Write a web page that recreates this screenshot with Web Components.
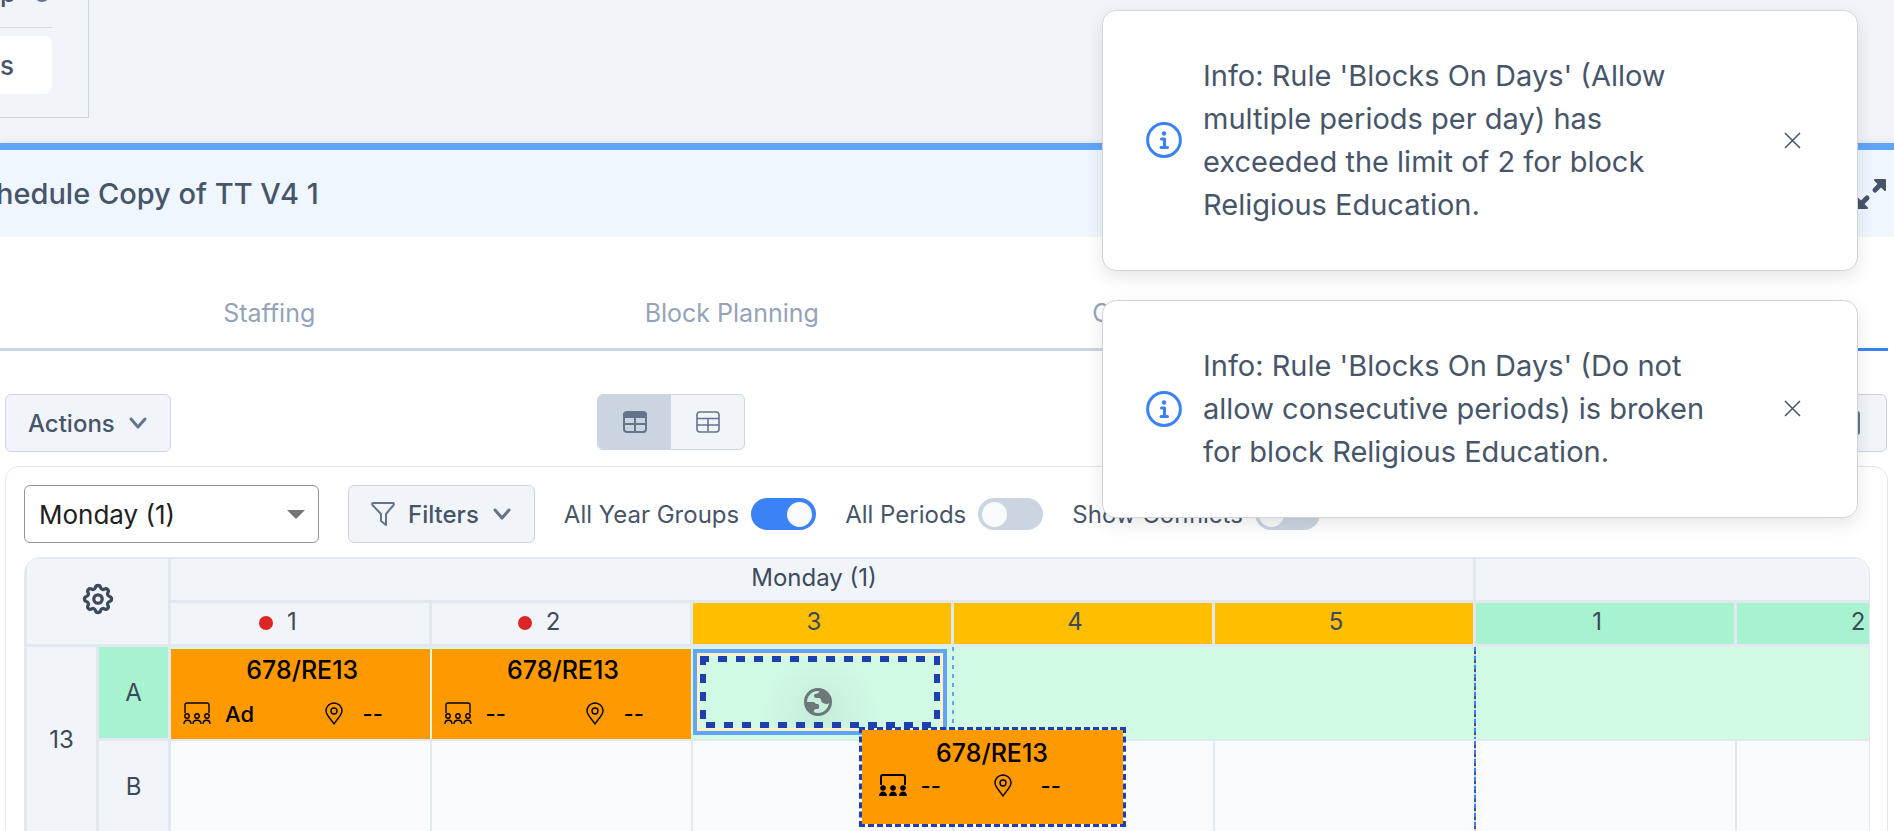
<!DOCTYPE html>
<html lang="en">
<head>
<meta charset="utf-8">
<title>Schedule</title>
<style>
    html, body {
        margin: 0;
        height: 100%;
        overflow: hidden;
        background: #f1f5f9;
        font-family: Inter, "Liberation Sans", sans-serif;
        color: #475569;
    }
</style>
</head>
<body>
<schedule-page></schedule-page>

<script>
const ICONS = {
    chevron: `<svg width="20" height="20" viewBox="0 0 20 20" fill="none" stroke="#64748b" stroke-width="3" stroke-linecap="round" stroke-linejoin="round"><path d="M3 6l7 8 7-8"/></svg>`,
    funnel: `<svg width="24" height="26" viewBox="0 0 24 26" fill="none" stroke="#64748b" stroke-width="2" stroke-linejoin="round"><path d="M2 2h20c1 0 1 1 .6 2L15 13v11l-5-4v-7L1.400 4C1 3 1 2 2 2z"/></svg>`,
    gear: `<svg width="36" height="36" viewBox="0 0 24 24" fill="none" stroke="#3d4a5c" stroke-width="2.2" stroke-linecap="round" stroke-linejoin="round"><path d="M10.325 4.317c.426-1.756 2.924-1.756 3.35 0a1.724 1.724 0 0 0 2.573 1.066c1.543-.94 3.31.826 2.37 2.37a1.724 1.724 0 0 0 1.065 2.572c1.756.426 1.756 2.924 0 3.35a1.724 1.724 0 0 0-1.066 2.573c.94 1.543-.826 3.31-2.37 2.37a1.724 1.724 0 0 0-2.572 1.065c-.426 1.756-2.924 1.756-3.35 0a1.724 1.724 0 0 0-2.573-1.066c-1.543.94-3.31-.826-2.37-2.37a1.724 1.724 0 0 0-1.065-2.572c-1.756-.426-1.756-2.924 0-3.35a1.724 1.724 0 0 0 1.066-2.573c-.94-1.543.826-3.31 2.37-2.37 1 .608 2.296.07 2.572-1.065z"/><circle cx="12" cy="12" r="2.8"/></svg>`,
    tableDark: `<svg width="24" height="24" viewBox="0 0 24 24" fill="none" stroke="#64748b" stroke-width="2"><rect x="1" y="2" width="22" height="20" rx="3"/><path d="M1 4h22v3H1z" fill="#64748b"/><path d="M1 14h22M12 7v15"/></svg>`,
    tableLight: `<svg width="24" height="24" viewBox="0 0 24 24" fill="none" stroke="#64748b" stroke-width="1.6"><rect x="1" y="2" width="22" height="20" rx="3"/><path d="M1 8.500h22M1 15h22M12 8.500v13"/></svg>`,
    expand: `<svg width="32" height="32" viewBox="0 0 32 32" fill="#475569" stroke="#475569" stroke-linejoin="round"><path stroke-width="2" d="M20 2h10v10z M12 30H2V20z"/><path stroke-width="5" stroke-linecap="round" d="M20 12l6-6M12 20l-6 6"/></svg>`,
    info: `<svg width="36" height="36" viewBox="0 0 36 36" fill="none" stroke="#3b82f6" stroke-width="3"><circle cx="18" cy="18" r="16.400"/><circle cx="18" cy="11.500" r="2.200" fill="#3b82f6" stroke="none"/><path stroke-linecap="round" stroke-linejoin="round" d="M15.500 17h3v8.500M15 25.500h6.500"/></svg>`,
    close: `<svg width="17" height="17" viewBox="0 0 17 17" fill="none" stroke="#475569" stroke-width="1.500"><path d="M1 1l15 15M16 1L1 16"/></svg>`,
    group: `<svg width="28" height="24" viewBox="0 0 28 24" fill="none" stroke="#000" stroke-width="1.4"><path d="M2 11V3a2 2 0 0 1 2-2h20a2 2 0 0 1 2 2v8"/><circle cx="4" cy="14" r="2.2"/><circle cx="14" cy="14" r="2.2"/><circle cx="24" cy="14" r="2.2"/><path d="M1 22c0-5 7-5 7 0M10 22c0-5 8-5 8 0M20 22c0-5 7-5 7 0"/></svg>`,
    groupSolid: `<svg width="28" height="24" viewBox="0 0 28 24" fill="none" stroke="#000" stroke-width="2"><path d="M2 11V3a2 2 0 0 1 2-2h20a2 2 0 0 1 2 2v8"/><g fill="#000" stroke="none"><circle cx="4" cy="14" r="2.8"/><circle cx="14" cy="14" r="2.8"/><circle cx="24" cy="14" r="2.8"/><path d="M0 22c0-6 8-6 8 0zM10 22c0-6 8-6 8 0zM20 22c0-6 8-6 8 0z"/></g></svg>`,
    pin: `<svg width="18" height="24" viewBox="0 0 18 24" fill="none" stroke="#000" stroke-width="1.4"><path d="M9 22C6 17 1 13 1 9a8 8 0 0 1 16 0c0 4-5 8-8 13z"/><circle cx="9" cy="9" r="3"/></svg>`,
    globe: `<svg width="28" height="28" viewBox="0 0 28 28"><circle cx="14" cy="14" r="12.500" fill="none" stroke="#6b7778" stroke-width="3"/><path fill="#6b7778" d="M2 14h8l2 2h2q1 0 1 2v2q0 1-2 1h-1q-2 0-2 2l-1 4A13 13 0 0 1 2 14zM17 1l-2 3q-1 2-4 2l-1 1q0 3 2 3h3q2 0 2 2t2 3q4 2 6 0l2-2A13 13 0 0 0 17 1z"/></svg>`,
    columns: `<svg width="26" height="24" viewBox="0 0 26 24" fill="none" stroke="#64748b" stroke-width="2"><rect x="1" y="1" width="20" height="22" rx="2"/><path d="M11 1v22"/></svg>`
};

class AppButton extends HTMLElement {
    connectedCallback() {
        this.attachShadow({ mode: "open" }).innerHTML = `
            <style>
                :host { display: inline-block; }
                button {
                    display: flex;
                    align-items: center;
                    gap: 13px;
                    height: 58px;
                    padding: 0 22px;
                    border: 1px solid #cbd5e1;
                    border-radius: 6px;
                    background: #f1f5f9;
                    color: #475569;
                    font: 500 24px Inter, sans-serif;
                }
            </style>
            <button type="button">${ICONS[this.getAttribute("icon")] || ""}<slot></slot>${this.hasAttribute("menu") ? ICONS.chevron : ""}</button>
        `;
    }
}

class ToggleSwitch extends HTMLElement {
    connectedCallback() {
        this.attachShadow({ mode: "open" }).innerHTML = `
            <style>
                :host { display: block; }
                label {
                    display: flex;
                    align-items: center;
                    gap: 12px;
                    font-size: 24px;
                    white-space: nowrap;
                }
                input {
                    appearance: none;
                    display: flex;
                    margin: 0;
                    width: 65px;
                    height: 32px;
                    padding: 0 4px;
                    box-sizing: border-box;
                    align-items: center;
                    border-radius: 16px;
                    background: #cbd5e1;
                }
                input::before {
                    content: "";
                    width: 25px;
                    height: 25px;
                    border-radius: 50%;
                    background: #f8fafc;
                }
                input:checked {
                    background: #3b82f6;
                    justify-content: flex-end;
                }
            </style>
            <label><slot></slot><input type="checkbox" ${this.hasAttribute("on") ? "checked" : ""}></label>
        `;
    }
}

class ViewSwitch extends HTMLElement {
    connectedCallback() {
        this.attachShadow({ mode: "open" }).innerHTML = `
            <style>
                :host {
                    display: flex;
                    height: 56px;
                    box-sizing: border-box;
                    border: 1px solid #cbd5e1;
                    border-radius: 6px;
                    overflow: hidden;
                    background: #f1f5f9;
                }
                button {
                    display: grid;
                    place-items: center;
                    width: 73px;
                    padding: 0;
                    border: 0;
                    background: none;
                }
                .on { background: #cbd5e1; }
            </style>
            <button type="button" class="on" aria-label="Grid view">${ICONS.tableDark}</button>
            <button type="button" aria-label="List view">${ICONS.tableLight}</button>
        `;
    }
}

class ToastMessage extends HTMLElement {
    connectedCallback() {
        this.attachShadow({ mode: "open" }).innerHTML = `
            <style>
                :host {
                    display: flex;
                    align-items: center;
                    padding: 43px 56px 44px 43px;
                    border: 1px solid #d1d5db;
                    border-radius: 14px;
                    background: #fff;
                    box-shadow: 0 6px 18px rgba(0, 0, 0, .1);
                }
                svg { display: block; flex: none; }
                p {
                    flex: 1;
                    margin: 0 76px 0 21px;
                    font-size: 29px;
                    line-height: 43px;
                }
                button {
                    border: 0;
                    padding: 0;
                    background: none;
                }
            </style>
            ${ICONS.info}
            <p><slot></slot></p>
            <button type="button" aria-label="Close">${ICONS.close}</button>
        `;
    }
}

class LessonCard extends HTMLElement {
    connectedCallback() {
        const dragged = this.hasAttribute("dragged");
        this.attachShadow({ mode: "open" }).innerHTML = `
            <style>
                :host {
                    display: block;
                    height: 90px;
                    box-sizing: border-box;
                    padding: 4px 8px 4px 12px;
                    background: #ff9900;
                    color: #000;
                }
                :host([dragged]) {
                    height: 100px;
                    padding: 6px 17px;
                    border: 3px dashed #1e40af;
                    background-clip: padding-box;
                }
                .name {
                    font-size: 25px;
                    font-weight: 500;
                    line-height: 34px;
                    text-align: center;
                }
                .row {
                    display: grid;
                    grid-template-columns: 42px 1fr 38px 59px;
                    align-items: center;
                    margin-top: 13px;
                    font-size: 22px;
                    font-weight: 500;
                    line-height: 28px;
                }
                :host([dragged]) .row {
                    grid-template-columns: 42px 73px 47px 1fr;
                    margin-top: 2px;
                }
                svg { display: block; }
            </style>
            <div class="name"><slot></slot></div>
            <div class="row">
                ${dragged ? ICONS.groupSolid : ICONS.group}
                <span>${this.getAttribute("staff")}</span>
                ${ICONS.pin}
                <span>${this.getAttribute("room")}</span>
            </div>
        `;
    }
}

class TimetableGrid extends HTMLElement {
    connectedCallback() {
        this.attachShadow({ mode: "open" }).innerHTML = `
            <style>
                :host {
                    display: block;
                    overflow: hidden;
                    border: 1px solid #e2e8f0;
                    border-radius: 16px 16px 0 0;
                    background: #f8fafc;
                }
                table {
                    table-layout: fixed;
                    width: 1971px;
                    margin: -2px 0 0 -1px;
                    border-collapse: collapse;
                    font-size: 24px;
                    color: #3d4a5c;
                }
                th, td {
                    box-sizing: border-box;
                    padding: 0;
                    border: 3px solid #e2e8f0;
                    font-weight: 400;
                }
                td { position: relative; border-width: 2px; }
                th { background: #f1f5f9; }
                .days th { height: 44px; }
                .periods th { height: 44px; }
                .days .settings { padding-bottom: 5px; }
                .days .day, .periods th { padding: 0 16px 4px 0; }
                .periods .amber { background: #ffbf00; }
                th.green { background: #a7f3d0; }
                .row-a { height: 94px; }
                .row-b { height: 94px; }
                .row-a td {
                    vertical-align: bottom;
                    background: #d1fae5;
                    border-color: #e2e8f0 #d1fae5;
                }
                .dot {
                    display: inline-block;
                    width: 14px;
                    height: 14px;
                    margin: 0 14px 0 -28px;
                    border-radius: 50%;
                    background: #dc2626;
                }
                svg { display: block; margin: auto; }

                /* guide lines between slots */
                .mark::before, .day-start::before {
                    content: "";
                    position: absolute;
                    top: 0;
                    bottom: 0;
                    left: -2px;
                    width: 2px;
                    background: repeating-linear-gradient(#60a5fa 0 4px, transparent 4px 9px);
                }
                .day-start::before {
                    background: repeating-linear-gradient(#3b82f6 0 4px, #475569 4px 7px, #cbd5e1 7px 9px);
                }

                .drop {
                    position: relative;
                    margin: 0 5px 4px 0;
                    height: 86px;
                    box-sizing: border-box;
                    padding: 3px;
                    border: 4px solid #60a5fa;
                    background: #fef0c7;
                }
                .zone {
                    --dash-x: repeating-linear-gradient(90deg, #1e40af 0 9px, transparent 9px 18px);
                    --dash-y: repeating-linear-gradient(#1e40af 0 9px, transparent 9px 18px);
                    display: grid;
                    place-items: end center;
                    height: 100%;
                    box-sizing: border-box;
                    padding: 0 4px 12px 0;
                    background:
                        var(--dash-x) top / 100% 6px no-repeat,
                        var(--dash-x) 6px bottom / 100% 6px no-repeat,
                        var(--dash-y) left / 6px 100% no-repeat,
                        var(--dash-y) right / 6px 100% no-repeat,
                        radial-gradient(circle at 50% 80%, #c5ecd9, #d1fae5 60px);
                }
                .zone svg { margin: 0; }
                lesson-card[dragged] {
                    position: absolute;
                    left: 162px;
                    top: 74px;
                    width: 267px;
                    z-index: 1;
                }
            </style>
            <table>
                <colgroup>
                    <col style="width: 72px"><col style="width: 72px">
                    <col span="7" style="width: 261px">
                </colgroup>
                <tr class="days">
                    <th class="settings" colspan="2" rowspan="2">${ICONS.gear}</th>
                    <th class="day" colspan="5">Monday (1)</th>
                    <th class="day" colspan="2"></th>
                </tr>
                <tr class="periods">
                    <th><span class="dot"></span>1</th>
                    <th><span class="dot"></span>2</th>
                    <th class="amber">3</th>
                    <th class="amber">4</th>
                    <th class="amber">5</th>
                    <th class="green">1</th>
                    <th class="green">2</th>
                </tr>
                <tr class="row-a">
                    <th rowspan="2">13</th>
                    <th class="green">A</th>
                    <td><lesson-card staff="Ad" room="--">678/RE13</lesson-card></td>
                    <td><lesson-card staff="--" room="--">678/RE13</lesson-card></td>
                    <td>
                        <div class="drop">
                            <div class="zone">${ICONS.globe}</div>
                            <lesson-card dragged staff="--" room="--">678/RE13</lesson-card>
                        </div>
                    </td>
                    <td class="mark"></td><td></td><td class="day-start"></td><td></td>
                </tr>
                <tr class="row-b">
                    <th>B</th>
                    <td></td><td></td><td></td><td></td><td></td><td class="day-start"></td><td></td>
                </tr>
            </table>
        `;
    }
}

class SchedulePage extends HTMLElement {
    connectedCallback() {
        this.attachShadow({ mode: "open" }).innerHTML = `
            <style>
                :host {
                    display: flex;
                    flex-direction: column;
                    height: 100%;
                    overflow: hidden;
                }
                aside {
                    flex: none;
                    width: 88px;
                    height: 117px;
                    border: solid #cbd5e1;
                    border-width: 0 1px 1px 0;
                    font-size: 26px;
                    font-weight: 500;
                }
                .copy {
                    display: flex;
                    align-items: end;
                    gap: 18px;
                    height: 27px;
                    width: 52px;
                    border-bottom: 1px solid #d3d9e0;
                    line-height: 28px;
                }
                .copy span { margin-bottom: 20px; }
                .copy i {
                    width: 16px;
                    height: 16px;
                    margin-bottom: 25px;
                    border-radius: 50%;
                    background: #64748b;
                }
                .chip {
                    display: flex;
                    align-items: center;
                    margin-top: 8px;
                    width: 52px;
                    height: 58px;
                    border-radius: 0 8px 8px 0;
                    background: #fff;
                }
                main {
                    flex: 1;
                    margin-top: 25px;
                    border-top: 7px solid #60a5fa;
                    background: #fff;
                    box-shadow: 0 0 8px rgba(0, 0, 0, .1);
                }
                header {
                    display: flex;
                    align-items: center;
                    justify-content: space-between;
                    height: 87px;
                    padding-right: 7px;
                    background: #eff6ff;
                }
                h1 {
                    margin: 0 0 0 -4px;
                    font-size: 29px;
                    font-weight: 500;
                }
                header button { padding: 0; border: 0; background: none; }
                svg { display: block; }
                nav {
                    display: grid;
                    grid-template-columns: 38px repeat(4, 1fr);
                    margin: 37px 6px 0 0;
                }
                nav > * {
                    padding: 22px 0 18px;
                    border-bottom: 3px solid #cbd5e1;
                    color: #94a3b8;
                    font-size: 25px;
                    line-height: 34px;
                    text-align: center;
                    text-decoration: none;
                }
                nav .active { border-color: #3b82f6; color: #3b82f6; }
                .tools {
                    display: flex;
                    justify-content: space-between;
                    margin: 43px 7px 0 5px;
                }
                .right {
                    display: flex;
                    justify-content: flex-end;
                    width: 38%;
                }
                .panel {
                    margin: 14px 6px 0 5px;
                    padding: 18px 17px 0 18px;
                    border: 1px solid #e2e8f0;
                    border-radius: 14px 14px 0 0;
                }
                .filters {
                    display: flex;
                    align-items: center;
                    gap: 29px;
                    margin-bottom: 14px;
                }
                .select { position: relative; }
                select {
                    appearance: none;
                    display: block;
                    width: 295px;
                    height: 58px;
                    padding: 0 14px;
                    border: 1px solid #949494;
                    border-radius: 6px;
                    background: #fff;
                    color: #212121;
                    font: 400 26px Inter, sans-serif;
                }
                .select::after {
                    content: "";
                    position: absolute;
                    right: 14px;
                    top: 25px;
                    border: solid transparent;
                    border-width: 9px 9px 0;
                    border-top-color: #757575;
                }
                .toasts {
                    position: absolute;
                    top: 10px;
                    right: 36px;
                    display: grid;
                    gap: 29px;
                    width: 756px;
                }
            </style>
            <aside>
                <div class="copy"><span>p</span><i></i></div>
                <div class="chip">s</div>
            </aside>
            <main>
                <header>
                    <h1>hedule Copy of TT V4 1</h1>
                    <button type="button" aria-label="Expand">${ICONS.expand}</button>
                </header>
                <nav>
                    <span></span>
                    <a href="#staffing">Staffing</a>
                    <a href="#blocks">Block Planning</a>
                    <a href="#classes">Class Scheduling</a>
                    <a href="#schedule" class="active">Schedule</a>
                </nav>
                <div class="tools">
                    <app-button menu>Actions</app-button>
                    <view-switch></view-switch>
                    <div class="right">
                        <app-button icon="columns"></app-button>
                    </div>
                </div>
                <section class="panel">
                    <div class="filters">
                        <div class="select">
                            <select aria-label="Day"><option>Monday (1)</option></select>
                        </div>
                        <app-button icon="funnel" menu>Filters</app-button>
                        <toggle-switch on>All Year Groups</toggle-switch>
                        <toggle-switch>All Periods</toggle-switch>
                        <toggle-switch>Show Conflicts</toggle-switch>
                    </div>
                    <timetable-grid></timetable-grid>
                </section>
            </main>
            <div class="toasts">
                <toast-message>Info: Rule 'Blocks On Days' (Allow multiple periods per day) has exceeded the limit of 2 for block Religious Education.</toast-message>
                <toast-message>Info: Rule 'Blocks On Days' (Do not allow consecutive periods) is broken for block Religious Education.</toast-message>
            </div>
        `;
    }
}

customElements.define("app-button", AppButton);
customElements.define("toggle-switch", ToggleSwitch);
customElements.define("view-switch", ViewSwitch);
customElements.define("toast-message", ToastMessage);
customElements.define("lesson-card", LessonCard);
customElements.define("timetable-grid", TimetableGrid);
customElements.define("schedule-page", SchedulePage);
</script>
</body>
</html>
